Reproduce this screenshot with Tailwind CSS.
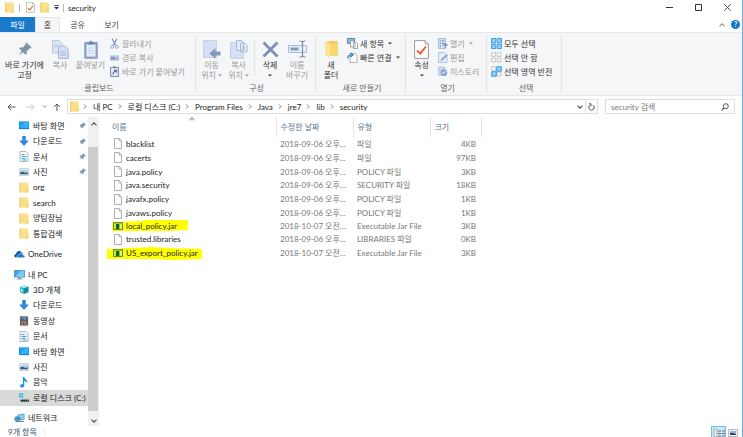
<!DOCTYPE html>
<html lang="ko">
<head>
<meta charset="utf-8">
<meta name="viewport" content="width=device-width, initial-scale=1">
<title>security</title>
<script src="https://cdn.jsdelivr.net/npm/@tailwindcss/browser@4"></script>
</head>
<body class="h-screen overflow-hidden bg-white font-['Lato','Noto_Sans_CJK_KR',sans-serif] text-[8px] leading-[10px] text-[#222] whitespace-nowrap">

<svg class="hidden" aria-hidden="true">
  <symbol id="folder" viewBox="0 0 9 11"><path d="M0 .5h8v1.200h1v8.800H0z" fill="#fbe08c"/><path d="M0 .5h1.500v10H0z" fill="#f6d36e"/><path d="M6.500 7.500H9v3H5z" fill="#f7d774"/></symbol>
  <symbol id="bigfolder" viewBox="0 0 13 18"><path d="M2 1h11v15H2z" fill="#f3cb5c"/><path d="M0 1l5 3v14l-5-3z" fill="#fde495"/><path d="M5 4h5V2h3v14H5z" fill="#f7d774"/></symbol>
  <symbol id="desktop" viewBox="0 0 11 9"><path d="M0 0h11v8.500H0z" fill="#1487dc"/><path d="M.7.7h9.600v6.300H.7z" fill="#1ba1f8"/><path d="M.7 7L7 .7h3.300V7z" fill="#35b1ff"/></symbol>
  <symbol id="down" viewBox="0 0 10 10"><path d="M3.200 0h3.600v4.500H10L5 10 0 4.500h3.200z" fill="#3388d8"/></symbol>
  <symbol id="doc" viewBox="0 0 9 11"><path d="M.5.5h6L8.500 2.500v8h-8z" fill="#f4f8fb" stroke="#a0a8ae" stroke-width=".8"/><path d="M2 3.500h3M2 5.500h5M2 7.500h4M3 9h4" stroke="#4aa5d8"/></symbol>
  <symbol id="photo" viewBox="0 0 11 8"><path d="M.4.4h10.200v7.200H.4z" fill="#fff" stroke="#a7aeb5" stroke-width=".8"/><path d="M1.500 1.500h8v5h-8z" fill="#a9d2ec"/><path d="M1.500 4.200l3-.6 2 1.400 3-.8v2.300h-8z" fill="#2b5670"/></symbol>
  <symbol id="cloud" viewBox="0 0 11 8"><path d="M2 7.500C-.5 7.500-.2 4 2 4 2.500 1 6 0 7.300 2.500 9 2.600 9 4 9 4.500z" fill="#0b5ea8"/><path d="M4.500 7.700C2.800 7.500 3 5 4.900 5 5.500 3 8.500 3.200 8.700 5c2.600-.2 2.900 2.700.8 2.700z" fill="#1a79cb" stroke="#fff" stroke-width=".5"/></symbol>
  <symbol id="pc" viewBox="0 0 11 10"><path d="M.4.4h10.200v6.700H.4z" fill="#3fa9f0" stroke="#5b7f99" stroke-width=".8"/><path d="M1 6.700L7 .8h3.200v5.900z" fill="#79caff"/><path d="M4 7.300h3V9H4zM2.500 8.700h6v.8h-6z" fill="#8d9aa4"/></symbol>
  <symbol id="cube" viewBox="0 0 11 11"><path d="M1 2.500L6 .5l4.500 1.800L5.500 4z" fill="#9be7f0"/><path d="M1 2.500L5.500 4v6.500L1 8.500z" fill="#2bb5cc"/><path d="M5.500 4l5-1.700v6.200l-5 2z" fill="#0e8ba4"/><path d="M2 5l2 .8v2.500L2 7.500z" fill="#d5f8fb"/></symbol>
  <symbol id="film" viewBox="0 0 9 11"><path d="M0 .5h9v10H0z" fill="#3c3f44"/><path d="M2 1.200h5v4H2z" fill="#5f8fd0"/><path d="M2 5.800h5v4H2z" fill="#c88e4e"/><path d="M3 3l3 2H3zM4 7l2 2H3z" fill="#253a66"/><path d="M1 1v9M8 1v9" stroke="#d5d5d5" stroke-width=".8" stroke-dasharray="1 1"/></symbol>
  <symbol id="music" viewBox="0 0 8 11"><path d="M2.900 0h1.400c.2 2.300 3.700 2.700 3 6.300-.5-1.500-1.600-2.200-3-2.400v4.600c-.1 2.500-4.100 2.700-4.100.4 0-1.500 1.500-2.200 2.700-1.700z" fill="#1c93dc"/></symbol>
  <symbol id="drive" viewBox="0 0 10 9"><path d="M0 .5h1.800v1.600H0zM2.300.5h2v1.600h-2zM0 2.700h1.800v1.700H0zM2.300 2.700h2v1.700h-2z" fill="#19b2ea"/><path d="M2 5.500h7l1 1.300H1.500z" fill="#b9bdc0"/><path d="M1.500 6.700H10v2H1.500z" fill="#34383b"/><path d="M8 7.300h1v.8H8z" fill="#49e04f"/></symbol>
  <symbol id="network" viewBox="0 0 11 10"><path d="M3.500 1.800L10.500.4v6L3.500 8z" fill="#4e9fd0"/><path d="M4.300 2.500l5.400-1.100v4.300L4.300 7z" fill="#8fd3f4"/><circle cx="3.500" cy="6" r="3.100" fill="#3386b8"/><path d="M1 5c2-2 3-1 4-1M1 7.500c2-1 3 0 5-1" stroke="#a9dcf2" fill="none" stroke-width=".7"/><path d="M6 8h4v1H5z" fill="#6f8794"/></symbol>
  <symbol id="file" viewBox="0 0 8 11"><path d="M.5.5h4.700l2.300 2.300v7.700h-7z" fill="#fdfdfd" stroke="#9b9b9b" stroke-width=".8"/><path d="M5 .5v2.500h2.500" fill="none" stroke="#9b9b9b" stroke-width=".7"/></symbol>
  <symbol id="jar" viewBox="0 0 10 8"><path d="M.5.5h9v7h-9z" fill="#c5ec4c" stroke="#6d8a18"/><path d="M.5.5h9v1h-9z" fill="#86a535"/><path d="M3 2h3.300v5H3z" fill="#0c6a1a"/><path d="M7 2.500h1.500v4H7z" fill="#f0f68a"/></symbol>
  <symbol id="pin" viewBox="0 0 7 7"><path d="M4.200.2L6.800 2.800l-.6.500-.5-.1-1.400 1.500.1 1.100-.6.600L2.500 5.100.3 6.800l1.600-2.300L.6 3.200l.6-.6 1.200.1 1.400-1.400-.1-.6z" fill="#80919f"/></symbol>
  <symbol id="check" viewBox="0 0 15 19"><path d="M.6.6h10.400l3.400 3.400v14.400H.6z" fill="#fdfdfd" stroke="#9a9a9a"/><path d="M11 .6V4h3.400" fill="none" stroke="#9a9a9a" stroke-width=".8"/><path d="M3 10.500l3.300 3.200L12 6.500" fill="none" stroke="#e8622a" stroke-width="1.900"/></symbol>
  <symbol id="copy" viewBox="0 0 17 19"><path d="M.5.5h6.500l3 3v9.500H.5z" fill="#dbe5f4" stroke="#b7c6de"/><path d="M6.500 6h6.500l3.300 3.200v9.300H6.500z" fill="#d3dff1" stroke="#a6b8d5"/><path d="M2 5h4M2 7h3M8 11.500h6M8 13.500h6M8 15.500h6" stroke="#adc0de" stroke-width=".9"/></symbol>
  <symbol id="paste" viewBox="0 0 14 19"><path d="M.8 2.500h12.400v15.700H.8z" fill="#8fa3c8" stroke="#8499c1"/><path d="M2.500 4.500h9v12h-9z" fill="#e6eefa"/><path d="M4 2.500h1.500C5.500 0 8.500 0 8.500 2.500H10v2H4z" fill="#7387ad"/><path d="M4 8h6M4 10.500h6M4 13h6" stroke="#bfd0ea" stroke-width=".9"/></symbol>
  <symbol id="cut" viewBox="0 0 9 11"><path d="M2 .5l3.800 7M7 .5L3.200 7.500" stroke="#8093b5" stroke-width="1.200"/><circle cx="2.200" cy="8.800" r="1.500" fill="none" stroke="#8fa6d0"/><circle cx="6.800" cy="8.800" r="1.500" fill="none" stroke="#8fa6d0"/></symbol>
  <symbol id="path" viewBox="0 0 10 6"><path d="M0 0h10v6H0z" fill="#b3c6e4"/><path d="M1.500 4.500l.8-2.500 1 2.500 1-2.500.8 2.500M6 4h1M8 4h1" fill="none" stroke="#5d76a4" stroke-width=".8"/></symbol>
  <symbol id="shortcut" viewBox="0 0 9 11"><path d="M.6 1.500h7.800v8.900H.6z" fill="#e8effa" stroke="#8397bb" stroke-width="1.200"/><path d="M3 .3h3v2H3z" fill="#7184a9"/><path d="M3 8.500c0-2 .5-3 3-3.500M4 4.300h2.500v2.500" fill="none" stroke="#5c75a6" stroke-width="1.200"/></symbol>
  <symbol id="moveto" viewBox="0 0 18 19"><path d="M.5.500h13v17H.5z" fill="#d5e0f2" stroke="#c3d1e8"/><path d="M17.500 11.500h-5V8L6.500 13.500l6 5.500v-3.500h5z" fill="#8497bd"/></symbol>
  <symbol id="copyto" viewBox="0 0 18 19"><path d="M.5 2.500h13v16H.5z" fill="#d5e0f2" stroke="#c3d1e8"/><path d="M6.500.5h5l2 2v8h-7zM10.500 3h4l2.500 2.500v6.500h-6.500z" fill="#e3ebf8" stroke="#a8bad7"/><path d="M12 7h3M12 9h3" stroke="#a8bad7" stroke-width=".8"/></symbol>
  <symbol id="delete" viewBox="0 0 17 17"><path d="M1.500 1.500l14 14M15.500 1.500l-14 14" stroke="#7c8fb5" stroke-width="2.800"/></symbol>
  <symbol id="rename" viewBox="0 0 19 18"><path d="M.5 5.500h18v7H.5z" fill="#e8effa" stroke="#a8bad7"/><path d="M2.500 7.500h8v3h-8z" fill="#8398c4"/><path d="M11.500 1c2 0 3 .3 3 1.500v13c0 1.200-1 1.500-3 1.500M17.500 1c-2 0-3 .3-3 1.500M17.500 17c-2 0-3-.3-3-1.500" fill="none" stroke="#7f90ae" stroke-width="1.200"/></symbol>
  <symbol id="newitem" viewBox="0 0 11 11"><path d="M.5.5h7v5h-7z" fill="#86bde0" stroke="#6a8599"/><path d="M3.500 3h3l1.500 1.500V9H3.500zM6.500 4.500h2.500l1.500 1.500v4.500h-4z" fill="#fff" stroke="#8b979f" stroke-width=".8"/></symbol>
  <symbol id="easy" viewBox="0 0 11 11"><path d="M3 1.500h5l2 2v7H3z" fill="#fff" stroke="#a0a0a0" stroke-width=".8"/><path d="M.8 6.500C.8 4 2 3 4.500 3M3.500 1L6 3 3.500 5" fill="none" stroke="#2777bb" stroke-width="1.200"/></symbol>
  <symbol id="open" viewBox="0 0 10 11"><path d="M.5.500h7v10h-7z" fill="#cfdcf1" stroke="#a9bcdc"/><path d="M2 3h1M4 3h2M2 5.500h1M4 5.500h2M2 8h1" stroke="#7288b0"/><path d="M7.500 10V6M5.500 7.500l2-2 2 2" fill="none" stroke="#7f93bd" stroke-width="1.200"/></symbol>
  <symbol id="edit" viewBox="0 0 10 11"><path d="M.5.500h6l2.500 2.500v7.500H.5z" fill="#e6edf8" stroke="#b2c3de"/><path d="M2.500 9l.5-2L8.500 2 10 3.500 4.500 8.500z" fill="#94abd2"/></symbol>
  <symbol id="history" viewBox="0 0 11 11"><path d="M.5.500h7v9h-7z" fill="#cbd9ef" stroke="#b7c8e2"/><circle cx="6.500" cy="6.800" r="3.700" fill="#8ca4ce"/><path d="M4 7.500c2 .5 3-2 5-2" stroke="#fff" fill="none"/></symbol>
  <symbol id="selall" viewBox="0 0 11 11"><path d="M.5.5h4.300v4.300H.5zM6.200.5h4.300v4.300H6.200zM.5 6.200h4.300v4.300H.5zM6.200 6.200h4.300v4.300H6.200z" fill="#8fcdf8" stroke="#3c9fe4"/></symbol>
  <symbol id="selnone" viewBox="0 0 11 11"><path d="M.7.7h3.600v3.600H.7zM6.200.7h3.600v3.600H6.200zM.7 6.200h3.600v3.600H.7zM6.200 6.200h3.600v3.600H6.200z" fill="#fff" stroke="#b5b5b5" stroke-width=".8"/></symbol>
  <symbol id="selinv" viewBox="0 0 11 11"><path d="M.7.7h3.600v3.600H.7zM6.200 6.200h3.600v3.600H6.200z" fill="#fff" stroke="#b5b5b5" stroke-width=".8"/><path d="M5.700.7h4.600v4.600H5.700zM.7 5.700h4.600v4.600H.7z" fill="#8fcdf8" stroke="#3c9fe4"/></symbol>
  <symbol id="chev" viewBox="0 0 4 5"><path d="M1 .5l2 2-2 2" fill="none" stroke="#666" stroke-width=".9"/></symbol>
  <symbol id="tri" viewBox="0 0 4 3"><path d="M0 .4h4L2 2.600z" fill="currentColor"/></symbol>
  <symbol id="vee" viewBox="0 0 6 4"><path d="M.5.6L3 3.200 5.500.6" fill="none" stroke="currentColor" stroke-width="1.200"/></symbol>
</svg>

<div class="flex h-full flex-col border-r border-[#6aaddd]">

  <header class="flex h-[17px] shrink-0 items-center pb-[2px]">
    <svg class="ml-[5px] h-[11px] w-[9px]"><use href="#folder"/></svg>
    <span class="mx-[5px] h-[8px] w-px bg-[#bbb]"></span>
    <button aria-label="속성" class="ml-[1px]"><svg class="h-[11px] w-[9px]"><use href="#check"/></svg></button>
    <button aria-label="새 폴더" class="ml-[5px]"><svg class="h-[11px] w-[9px]"><use href="#folder"/></svg></button>
    <button aria-label="빠른 실행 도구 모음" class="ml-[5px]"><svg class="h-[5px] w-[5px]" viewBox="0 0 5 5"><path d="M0 .5h5" stroke="#333" stroke-width=".8"/><path d="M0 2h5L2.500 4.500z" fill="#333"/></svg></button>
    <span class="mx-[4px] h-[8px] w-px bg-[#bbb]"></span>
    <h1>security</h1>
    <div class="ml-auto flex items-center gap-[22px] pr-[11px]">
      <button aria-label="최소화"><svg class="h-[7px] w-[7px]" viewBox="0 0 7 7"><path d="M0 3.500h7" stroke="#333"/></svg></button>
      <button aria-label="최대화"><svg class="h-[7px] w-[7px]" viewBox="0 0 7 7"><path d="M.5.5h6v6h-6z" fill="none" stroke="#333"/></svg></button>
      <button aria-label="닫기"><svg class="h-[7px] w-[7px]" viewBox="0 0 7 7"><path d="M.3.3l6.400 6.400M6.700.3L.3 6.700" stroke="#333" stroke-width=".9"/></svg></button>
    </div>
  </header>

  <div class="flex h-[15px] shrink-0 items-stretch text-[#444]">
    <button class="w-[35px] bg-[#1979ca] text-white">파일</button>
    <button class="w-[25px] border-x border-t border-[#e4e5e7] bg-[#f5f6f7]">홈</button>
    <button class="w-[35px]">공유</button>
    <button class="w-[33px]">보기</button>
    <div class="ml-auto flex items-center gap-[6px] pr-[2px]">
      <button aria-label="리본 최소화" class="text-[#999]"><svg class="h-[4px] w-[6px] rotate-180"><use href="#vee"/></svg></button>
      <button aria-label="도움말" class="size-[9px] rounded-full bg-[#1177cf] text-[7px] leading-[9px] font-bold text-white">?</button>
    </div>
  </div>

  <div class="flex h-[64px] shrink-0 border-y border-[#e6e7e9] bg-[#f5f6f8] py-[2px] text-[#333]">
    <section class="flex w-[196px] flex-col border-r border-[#e2e3e5] pl-[3px]">
      <div class="flex flex-1 pt-[3px]">
        <button class="flex w-[43px] flex-col items-center"><span class="flex h-[22px] items-center"><svg class="size-[14px]"><use href="#pin"/></svg></span>바로 가기에<br>고정</button>
        <button class="flex w-[28px] flex-col items-center text-[#999]"><span class="flex h-[22px] items-center"><svg class="h-[19px] w-[17px]"><use href="#copy"/></svg></span>복사</button>
        <button class="flex w-[33px] flex-col items-center text-[#999]"><span class="flex h-[22px] items-center"><svg class="h-[19px] w-[14px]"><use href="#paste"/></svg></span>붙여넣기</button>
        <div class="ml-[3px] flex flex-col gap-[3px] text-[#999]">
          <button class="flex h-[11px] items-center gap-[3px]"><svg class="h-[11px] w-[9px]"><use href="#cut"/></svg>잘라내기</button>
          <button class="flex h-[11px] items-center gap-[3px]"><svg class="h-[6px] w-[9px]"><use href="#path"/></svg>경로 복사</button>
          <button class="flex h-[11px] items-center gap-[3px]"><svg class="h-[11px] w-[9px]"><use href="#shortcut"/></svg>바로 가기 붙여넣기</button>
        </div>
      </div>
      <h2 class="text-center text-[#666]">클립보드</h2>
    </section>
    <section class="flex w-[120px] flex-col border-r border-[#e2e3e5] pl-[2px]">
      <div class="flex flex-1 pt-[3px]">
        <button class="flex w-[27px] flex-col items-center text-[#999]"><span class="flex h-[22px] items-center"><svg class="h-[19px] w-[18px]"><use href="#moveto"/></svg></span>이동<span class="flex items-center gap-[2px]">위치 <svg class="h-[3px] w-[4px]"><use href="#tri"/></svg></span></button>
        <button class="flex w-[27px] flex-col items-center text-[#999]"><span class="flex h-[22px] items-center"><svg class="h-[19px] w-[18px]"><use href="#copyto"/></svg></span>복사<span class="flex items-center gap-[2px]">위치 <svg class="h-[3px] w-[4px]"><use href="#tri"/></svg></span></button>
        <span class="mx-[2px] mt-[2px] h-[36px] w-px bg-[#e2e3e5]"></span>
        <button class="flex w-[26px] flex-col items-center"><span class="flex h-[22px] items-center"><svg class="size-[17px]"><use href="#delete"/></svg></span>삭제<svg class="mt-[4px] h-[3px] w-[4px]"><use href="#tri"/></svg></button>
        <button class="flex w-[28px] flex-col items-center text-[#999]"><span class="flex h-[22px] items-center"><svg class="h-[18px] w-[19px]"><use href="#rename"/></svg></span>이름<br>바꾸기</button>
      </div>
      <h2 class="text-center text-[#666]">구성</h2>
    </section>
    <section class="flex w-[90px] flex-col border-r border-[#e2e3e5] pl-[3px]">
      <div class="flex flex-1 pt-[3px]">
        <button class="flex w-[24px] flex-col items-center"><span class="flex h-[22px] items-center"><svg class="h-[18px] w-[13px]"><use href="#bigfolder"/></svg></span>새<br>폴더</button>
        <div class="ml-[4px] flex flex-col gap-[3px]">
          <button class="flex h-[11px] items-center gap-[2px]"><svg class="h-[11px] w-[11px]"><use href="#newitem"/></svg>새 항목 <svg class="ml-[2px] h-[3px] w-[4px]"><use href="#tri"/></svg></button>
          <button class="flex h-[11px] items-center gap-[2px]"><svg class="h-[11px] w-[11px]"><use href="#easy"/></svg>빠른 연결 <svg class="ml-[2px] h-[3px] w-[4px]"><use href="#tri"/></svg></button>
        </div>
      </div>
      <h2 class="text-center text-[#666]">새로 만들기</h2>
    </section>
    <section class="flex w-[81px] flex-col border-r border-[#e2e3e5] pl-[3px]">
      <div class="flex flex-1 pt-[3px]">
        <button class="flex w-[25px] flex-col items-center"><span class="flex h-[22px] items-center"><svg class="h-[19px] w-[15px]"><use href="#check"/></svg></span>속성<svg class="mt-[4px] h-[3px] w-[4px]"><use href="#tri"/></svg></button>
        <div class="ml-[4px] flex flex-col gap-[3px] text-[#999]">
          <button class="flex h-[11px] items-center gap-[2px]"><svg class="h-[11px] w-[10px]"><use href="#open"/></svg>열기 <svg class="ml-[2px] h-[3px] w-[4px]"><use href="#tri"/></svg></button>
          <button class="flex h-[11px] items-center gap-[2px]"><svg class="h-[11px] w-[10px]"><use href="#edit"/></svg>편집</button>
          <button class="flex h-[11px] items-center gap-[2px]"><svg class="h-[11px] w-[10px]"><use href="#history"/></svg>히스토리</button>
        </div>
      </div>
      <h2 class="text-center text-[#666]">열기</h2>
    </section>
    <section class="flex w-[75px] flex-col border-r border-[#e2e3e5] pl-[4px]">
      <div class="flex flex-1 flex-col gap-[3px] pt-[3px]">
        <button class="flex h-[11px] items-center gap-[2px]"><svg class="size-[11px]"><use href="#selall"/></svg>모두 선택</button>
        <button class="flex h-[11px] items-center gap-[2px]"><svg class="size-[11px]"><use href="#selnone"/></svg>선택 안 함</button>
        <button class="flex h-[11px] items-center gap-[2px]"><svg class="size-[11px]"><use href="#selinv"/></svg>선택 영역 반전</button>
      </div>
      <h2 class="text-center text-[#666]">선택</h2>
    </section>
  </div>

  <div class="flex h-[21px] shrink-0 items-center pr-[7px]">
    <div class="flex w-[67px] shrink-0 items-center gap-[6px] pl-[7px]">
      <button aria-label="뒤로"><svg class="h-[8px] w-[9px]" viewBox="0 0 9 8"><path d="M8.500 4H1M4 1L1 4l3 3" fill="none" stroke="#555"/></svg></button>
      <button aria-label="앞으로" class="ml-[4px]"><svg class="h-[8px] w-[9px]" viewBox="0 0 9 8"><path d="M.5 4H8M5 1l3 3-3 3" fill="none" stroke="#ccc"/></svg></button>
      <button aria-label="최근 위치" class="ml-[1px] text-[#888]"><svg class="h-[3px] w-[5px]"><use href="#vee"/></svg></button>
      <button aria-label="위로"><svg class="h-[8px] w-[8px]" viewBox="0 0 8 8"><path d="M4 8V1M1 4l3-3 3 3" fill="none" stroke="#555"/></svg></button>
    </div>
    <nav aria-label="주소" class="flex h-[15px] flex-1 items-center border border-[#dedede]">
      <svg class="ml-[2px] h-[11px] w-[9px]"><use href="#folder"/></svg>
      <ol class="ml-[4px] flex items-center gap-[5px]">
        <li class="flex items-center gap-[6px]"><svg class="h-[5px] w-[4px]"><use href="#chev"/></svg><a href="#pc">내 PC</a></li>
        <li class="flex items-center gap-[6px]"><svg class="h-[5px] w-[4px]"><use href="#chev"/></svg><a href="#c">로컬 디스크 (C:)</a></li>
        <li class="flex items-center gap-[6px]"><svg class="h-[5px] w-[4px]"><use href="#chev"/></svg><a href="#pf">Program Files</a></li>
        <li class="flex items-center gap-[6px]"><svg class="h-[5px] w-[4px]"><use href="#chev"/></svg><a href="#java">Java</a></li>
        <li class="flex items-center gap-[6px]"><svg class="h-[5px] w-[4px]"><use href="#chev"/></svg><a href="#jre7">jre7</a></li>
        <li class="flex items-center gap-[6px]"><svg class="h-[5px] w-[4px]"><use href="#chev"/></svg><a href="#lib">lib</a></li>
        <li class="flex items-center gap-[6px]"><svg class="h-[5px] w-[4px]"><use href="#chev"/></svg><a href="#security">security</a></li>
      </ol>
      <button aria-label="이전 위치" class="ml-auto pr-[2px] text-[#555]"><svg class="h-[4px] w-[6px]"><use href="#vee"/></svg></button>
      <button aria-label="새로 고침" class="flex h-full w-[12px] items-center justify-center border-l border-[#dedede]"><svg class="h-[8px] w-[7px]" viewBox="0 0 7 8"><path d="M5 2.200A2.700 2.700 0 1 1 2 2.200M1 .8h2v2.400" fill="none" stroke="#555"/></svg></button>
    </nav>
    <label class="ml-[7px] flex h-[15px] w-[130px] items-center border border-[#dedede] pr-[5px] pl-[5px]">
      <input type="search" aria-label="security 검색" placeholder="security 검색" class="min-w-0 flex-1 outline-none placeholder:text-[#777]">
      <svg class="size-[8px]" viewBox="0 0 8 8"><circle cx="4.800" cy="3.200" r="2.500" fill="none" stroke="#555"/><path d="M3 5L.6 7.400" stroke="#555" stroke-width="1.200"/></svg>
    </label>
  </div>

  <main class="flex min-h-0 flex-1">
    <aside class="flex w-[99px] shrink-0">
      <ul class="flex min-w-0 flex-1 flex-col overflow-hidden pt-[1px] text-[#222]">
        <li class="flex flex-1 items-center gap-[4px] pl-[19px]"><svg class="h-[9px] w-[10px]"><use href="#desktop"/></svg><a href="#q1">바탕 화면</a><svg class="mr-[2px] ml-auto size-[7px]"><use href="#pin"/></svg></li>
        <li class="flex flex-1 items-center gap-[4px] pl-[19px]"><svg class="h-[10px] w-[10px]"><use href="#down"/></svg><a href="#q2">다운로드</a><svg class="mr-[2px] ml-auto size-[7px]"><use href="#pin"/></svg></li>
        <li class="flex flex-1 items-center gap-[4px] pl-[19px]"><svg class="h-[11px] w-[10px]"><use href="#doc"/></svg><a href="#q3">문서</a><svg class="mr-[2px] ml-auto size-[7px]"><use href="#pin"/></svg></li>
        <li class="flex flex-1 items-center gap-[4px] pl-[19px]"><svg class="h-[8px] w-[10px]"><use href="#photo"/></svg><a href="#q4">사진</a><svg class="mr-[2px] ml-auto size-[7px]"><use href="#pin"/></svg></li>
        <li class="flex flex-1 items-center gap-[4px] pl-[19px]"><svg class="h-[11px] w-[10px]"><use href="#folder"/></svg><a href="#q5">org</a></li>
        <li class="flex flex-1 items-center gap-[4px] pl-[19px]"><svg class="h-[11px] w-[10px]"><use href="#folder"/></svg><a href="#q6">search</a></li>
        <li class="flex flex-1 items-center gap-[4px] pl-[19px]"><svg class="h-[11px] w-[10px]"><use href="#folder"/></svg><a href="#q7">양팀장님</a></li>
        <li class="flex flex-1 items-center gap-[4px] pl-[19px]"><svg class="h-[11px] w-[10px]"><use href="#folder"/></svg><a href="#q8">통합검색</a></li>
        <li class="mt-[5px] flex flex-1 items-center gap-[3px] pl-[14px]"><svg class="h-[8px] w-[11px]"><use href="#cloud"/></svg><a href="#one">OneDrive</a></li>
        <li class="mt-[5px] flex flex-1 items-center gap-[3px] pl-[14px]"><svg class="h-[10px] w-[11px]"><use href="#pc"/></svg><a href="#mypc">내 PC</a></li>
        <li class="flex flex-1 items-center gap-[4px] pl-[19px]"><svg class="h-[11px] w-[10px]"><use href="#cube"/></svg><a href="#p1">3D 개체</a></li>
        <li class="flex flex-1 items-center gap-[4px] pl-[19px]"><svg class="h-[10px] w-[10px]"><use href="#down"/></svg><a href="#p2">다운로드</a></li>
        <li class="flex flex-1 items-center gap-[4px] pl-[19px]"><svg class="h-[10px] w-[10px]"><use href="#film"/></svg><a href="#p3">동영상</a></li>
        <li class="flex flex-1 items-center gap-[4px] pl-[19px]"><svg class="h-[11px] w-[10px]"><use href="#doc"/></svg><a href="#p4">문서</a></li>
        <li class="flex flex-1 items-center gap-[4px] pl-[19px]"><svg class="h-[9px] w-[10px]"><use href="#desktop"/></svg><a href="#p5">바탕 화면</a></li>
        <li class="flex flex-1 items-center gap-[4px] pl-[19px]"><svg class="h-[8px] w-[10px]"><use href="#photo"/></svg><a href="#p6">사진</a></li>
        <li class="flex flex-1 items-center gap-[4px] pl-[19px]"><svg class="h-[11px] w-[10px]"><use href="#music"/></svg><a href="#p7">음악</a></li>
        <li class="flex flex-1 items-center gap-[4px] bg-[#d9d9d9] pl-[19px]"><svg class="h-[9px] w-[10px] shrink-0"><use href="#drive"/></svg><a href="#p8">로컬 디스크 (C:)</a></li>
        <li class="mt-[5px] flex flex-1 items-center gap-[3px] pl-[14px]"><svg class="h-[10px] w-[11px]"><use href="#network"/></svg><a href="#net">네트워크</a></li>
      </ul>
      <div class="flex w-[11px] flex-col bg-[#f0f0f0] text-[#555]">
        <button aria-label="위로 스크롤" class="flex h-[30px] justify-center pt-[5px]"><svg class="h-[4px] w-[6px] rotate-180"><use href="#vee"/></svg></button>
        <div class="w-[10px] flex-1 bg-[#cdcdcd]"></div>
        <button aria-label="아래로 스크롤" class="flex h-[15px] items-center justify-center pt-[5px]"><svg class="h-[4px] w-[6px]"><use href="#vee"/></svg></button>
      </div>
    </aside>

    <div class="relative flex-1 pl-[7px]">
      <svg class="absolute top-0 left-[90px] h-[4px] w-[6px] rotate-180 text-[#999]"><use href="#vee"/></svg>
      <table class="h-[142px] w-[375px] table-fixed text-left text-[#777]">
        <colgroup><col class="w-[170px]"><col class="w-[77px]"><col class="w-[77px]"><col class="w-[51px]"></colgroup>
        <thead class="text-[#60728a]">
          <tr class="h-[20px]">
            <th class="border-r border-[#e4e4e4] p-0 pl-[6px] font-normal">이름</th>
            <th class="border-r border-[#e4e4e4] p-0 pl-[4px] font-normal">수정한 날짜</th>
            <th class="border-r border-[#e4e4e4] p-0 pl-[4px] font-normal">유형</th>
            <th class="border-r border-[#e4e4e4] p-0 pl-[4px] font-normal">크기</th>
          </tr>
        </thead>
        <tbody>
          <tr><td class="p-0 pl-[8px]"><span class="flex items-center gap-[4px] text-[#222]"><svg class="h-[11px] w-[8px]"><use href="#file"/></svg>blacklist</span></td><td class="p-0 pl-[4px]">2018-09-06 오후...</td><td class="p-0 pl-[4px]">파일</td><td class="p-0 pr-[5px] text-right">4KB</td></tr>
          <tr><td class="p-0 pl-[8px]"><span class="flex items-center gap-[4px] text-[#222]"><svg class="h-[11px] w-[8px]"><use href="#file"/></svg>cacerts</span></td><td class="p-0 pl-[4px]">2018-09-06 오후...</td><td class="p-0 pl-[4px]">파일</td><td class="p-0 pr-[5px] text-right">97KB</td></tr>
          <tr><td class="p-0 pl-[8px]"><span class="flex items-center gap-[4px] text-[#222]"><svg class="h-[11px] w-[8px]"><use href="#file"/></svg>java.policy</span></td><td class="p-0 pl-[4px]">2018-09-06 오후...</td><td class="p-0 pl-[4px]">POLICY 파일</td><td class="p-0 pr-[5px] text-right">3KB</td></tr>
          <tr><td class="p-0 pl-[8px]"><span class="flex items-center gap-[4px] text-[#222]"><svg class="h-[11px] w-[8px]"><use href="#file"/></svg>java.security</span></td><td class="p-0 pl-[4px]">2018-09-06 오후...</td><td class="p-0 pl-[4px]">SECURITY 파일</td><td class="p-0 pr-[5px] text-right">18KB</td></tr>
          <tr><td class="p-0 pl-[8px]"><span class="flex items-center gap-[4px] text-[#222]"><svg class="h-[11px] w-[8px]"><use href="#file"/></svg>javafx.policy</span></td><td class="p-0 pl-[4px]">2018-09-06 오후...</td><td class="p-0 pl-[4px]">POLICY 파일</td><td class="p-0 pr-[5px] text-right">1KB</td></tr>
          <tr><td class="p-0 pl-[8px]"><span class="flex items-center gap-[4px] text-[#222]"><svg class="h-[11px] w-[8px]"><use href="#file"/></svg>javaws.policy</span></td><td class="p-0 pl-[4px]">2018-09-06 오후...</td><td class="p-0 pl-[4px]">POLICY 파일</td><td class="p-0 pr-[5px] text-right">1KB</td></tr>
          <tr><td class="p-0 pl-[7px]"><span class="relative flex items-center gap-[3px] text-[#222]"><svg class="absolute -top-[1px] -left-[1px] -z-10 h-[12px] w-[76px]" viewBox="0 0 76 12" preserveAspectRatio="none"><path d="M0 2l30-1 3-1h43v10l-20 1H0z" fill="#ff0"/></svg><svg class="h-[8px] w-[10px]"><use href="#jar"/></svg>local_policy.jar</span></td><td class="p-0 pl-[4px]">2018-10-07 오전...</td><td class="p-0 pl-[4px]">Executable Jar File</td><td class="p-0 pr-[5px] text-right">3KB</td></tr>
          <tr><td class="p-0 pl-[8px]"><span class="flex items-center gap-[4px] text-[#222]"><svg class="h-[11px] w-[8px]"><use href="#file"/></svg>trusted.libraries</span></td><td class="p-0 pl-[4px]">2018-09-06 오후...</td><td class="p-0 pl-[4px]">LIBRARIES 파일</td><td class="p-0 pr-[5px] text-right">0KB</td></tr>
          <tr><td class="p-0 pl-[7px]"><span class="relative flex items-center gap-[3px] text-[#222]"><svg class="absolute -top-[1px] -left-[6px] -z-10 h-[13px] w-[95px]" viewBox="0 0 95 13" preserveAspectRatio="none"><path d="M0 2l25-1 20-1 15 1 35 1v10l-30 1-25-1H0z" fill="#ff0"/></svg><svg class="h-[8px] w-[10px]"><use href="#jar"/></svg>US_export_policy.jar</span></td><td class="p-0 pl-[4px]">2018-10-07 오전...</td><td class="p-0 pl-[4px]">Executable Jar File</td><td class="p-0 pr-[5px] text-right">3KB</td></tr>
        </tbody>
      </table>
    </div>
  </main>

  <footer class="flex h-[11px] shrink-0 items-center pl-[8px] text-[#3b5578]">
    <span>9개 항목</span><span class="ml-[7px] h-[8px] w-px bg-[#eee]"></span>
    <div class="ml-auto flex h-full items-start gap-[2px] pr-[4px]">
      <button aria-label="자세히" class="h-[11px] w-[15px] border border-b-0 border-[#70c0e7] bg-[#cbe8f6] pl-[1px]"><svg class="h-[10px] w-[12px]" viewBox="0 0 12 10"><path d="M1 2h3v8H1z" fill="#eee" stroke="#999" stroke-width=".7"/><path d="M5 4h3M9 4h3M5 6.500h3M9 6.500h3M5 9h3M9 9h3" stroke="#667"/></svg></button>
      <button aria-label="큰 아이콘" class="pt-[3px]"><svg class="h-[8px] w-[10px]" viewBox="0 0 10 8"><path d="M.5.500h9v7h-9z" fill="#f4f4f4" stroke="#bbb"/><path d="M2 2h6v4H2z" fill="#8db8ec"/><path d="M2 4h3l3 1v1H2z" fill="#27485a"/></svg></button>
    </div>
  </footer>
</div>
</body>
</html>
